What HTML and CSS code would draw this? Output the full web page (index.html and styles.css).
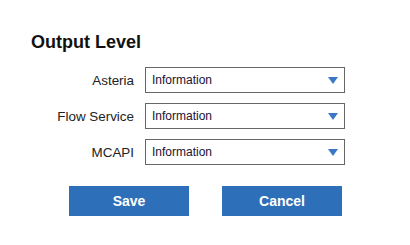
FILE: index.html
```html
<!DOCTYPE html>
<html>
<head>
<meta charset="utf-8">
<link rel="stylesheet" href="styles.css">
</head>
<body>
<div class="panel">
  <h1 class="title">Output Level</h1>
  <div class="rows">
    <div class="row">
      <span class="label">Asteria</span>
      <div class="select"><span class="value">Information</span><span class="arrow"></span></div>
    </div>
    <div class="row">
      <span class="label">Flow Service</span>
      <div class="select"><span class="value">Information</span><span class="arrow"></span></div>
    </div>
    <div class="row">
      <span class="label">MCAPI</span>
      <div class="select"><span class="value">Information</span><span class="arrow"></span></div>
    </div>
  </div>
  <div class="actions">
    <button class="btn">Save</button>
    <button class="btn">Cancel</button>
  </div>
</div>
</body>
</html>
```
FILE: styles.css
```css
html, body {
  margin: 0;
  padding: 0;
  background: #ffffff;
}
body {
  font-family: "Liberation Sans", Arial, sans-serif;
  color: #222;
}
.panel {
  width: 410px;
  height: 245px;
  padding-top: 32px;
  box-sizing: border-box;
}
.title {
  margin: 0 0 0 31px;
  font-size: 18px;
  line-height: 21px;
  font-weight: bold;
  color: #111;
}
.rows {
  margin-top: 14px;
  display: flex;
  flex-direction: column;
  gap: 10px;
}
.row {
  display: flex;
  align-items: center;
  gap: 11px;
}
.label {
  width: 103px;
  margin-left: 31px;
  text-align: right;
  font-size: 13.4px;
  color: #222;
}
.select {
  width: 200px;
  height: 26px;
  box-sizing: border-box;
  border: 1px solid #666;
  display: flex;
  align-items: center;
  justify-content: space-between;
  padding: 0 6px 0 6px;
}
.value {
  font-size: 12px;
  color: #221133;
}
.arrow {
  width: 0;
  height: 0;
  border-left: 5px solid transparent;
  border-right: 5px solid transparent;
  border-top: 7px solid #3a78c6;
  margin-top: 1px;
}
.actions {
  margin-top: 21px;
  display: flex;
  justify-content: center;
  gap: 33px;
  padding-left: 1px;
}
.btn {
  width: 120px;
  height: 30px;
  border: none;
  background: #2e6fba;
  color: #fff;
  font-family: "Liberation Sans", Arial, sans-serif;
  font-weight: bold;
  font-size: 14px;
  padding: 0;
}
```
